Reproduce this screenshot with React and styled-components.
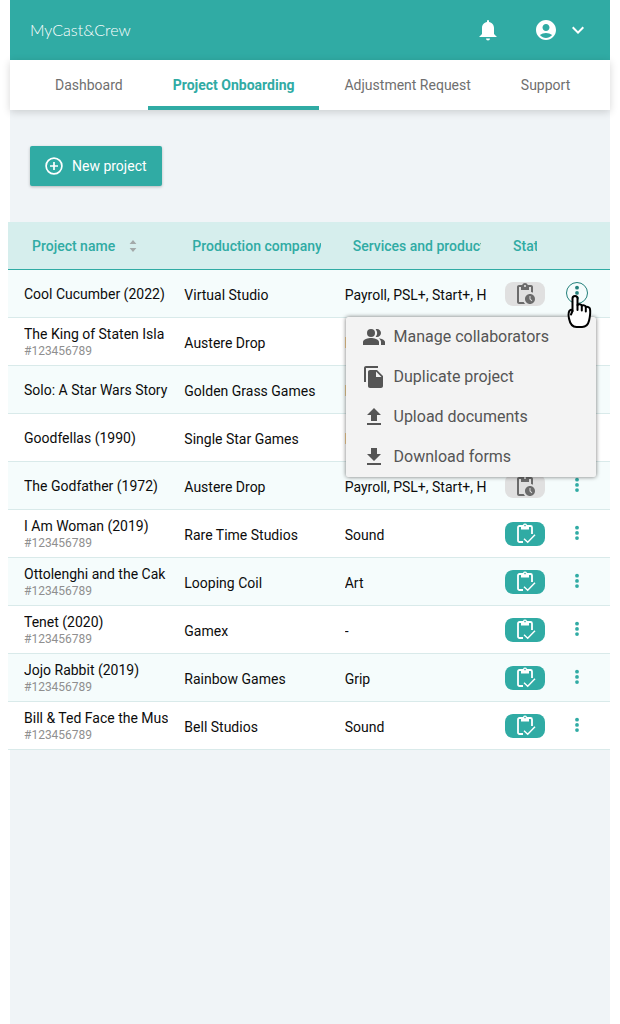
import React from 'react'
import styled, { createGlobalStyle } from 'styled-components';
import { MdAccountCircle, MdFileCopy, MdKeyboardArrowDown, MdPendingActions, MdPeopleAlt } from 'react-icons/md';

const tabs = ['Dashboard', 'Project Onboarding', 'Adjustment Request', 'Support'];

const projects = [
  { name: 'Cool Cucumber (2022)', company: 'Virtual Studio', services: 'Payroll, PSL+, Start+, H', pending: true },
  { name: 'The King of Staten Isla', id: '#123456789', company: 'Austere Drop', services: 'Payroll, PSL+, Start+, H', pending: true },
  { name: 'Solo: A Star Wars Story', company: 'Golden Grass Games', services: 'Payroll, PSL+, Start+, H', pending: true },
  { name: 'Goodfellas (1990)', company: 'Single Star Games', services: 'Payroll, PSL+, Start+, H', pending: true },
  { name: 'The Godfather (1972)', company: 'Austere Drop', services: 'Payroll, PSL+, Start+, H', pending: true },
  { name: 'I Am Woman (2019)', id: '#123456789', company: 'Rare Time Studios', services: 'Sound' },
  { name: 'Ottolenghi and the Cak', id: '#123456789', company: 'Looping Coil', services: 'Art' },
  { name: 'Tenet (2020)', id: '#123456789', company: 'Gamex', services: '-' },
  { name: 'Jojo Rabbit (2019)', id: '#123456789', company: 'Rainbow Games', services: 'Grip' },
  { name: 'Bill & Ted Face the Music', id: '#123456789', company: 'Bell Studios', services: 'Sound' },
];

const BellIcon = () => (
  <svg width="24" height="24" viewBox="0 0 24 24" fill="currentColor">
    <path d="M14 20.500a2 2 0 0 1-4 0h4M12 2a1 1 0 0 1 1 1v1.080c2.840.480 5 2.950 5 5.920v6l3 3H3l3-3v-6c0-2.970 2.160-5.440 5-5.920V3a1 1 0 0 1 1-1z" />
  </svg>
)

const PlusCircleIcon = () => (
  <svg width="18" height="18" viewBox="0 0 18 18" fill="none" stroke="currentColor" strokeWidth="1.7">
    <circle cx="9" cy="9" r="7.900" />
    <path d="M9 5v8M5 9h8" />
  </svg>
)

const SortIcon = () => (
  <svg width="8" height="12" viewBox="0 0 8 12" fill="#a3a9a9">
    <path d="M4 0l3.400 4H.6zM4 12l3.400-4H.6z" />
  </svg>
)

const CheckedIcon = () => (
  <svg width="24" height="24" viewBox="0 0 24 24" fill="none" stroke="#fff">
    <path d="M10 20H6.500A1.500 1.500 0 0 1 5 18.500v-13A1.500 1.500 0 0 1 6.500 4h11A1.500 1.500 0 0 1 19 5.500V12" strokeWidth="1.800" />
    <path d="M8 3h2a2.100 2.100 0 0 1 4 0h2v4.500H8z" fill="#fff" stroke="none" />
    <circle cx="12" cy="3.600" r="0.800" fill="#30aba4" stroke="none" />
    <path d="M11 16.800l3.700 3.500 7.300-7.500" strokeWidth="1.400" />
  </svg>
)

const UploadIcon = () => (
  <svg width="24" height="24" viewBox="0 0 24 24" fill="currentColor">
    <path d="M9 16v-6H5l7-7 7 7h-4v6H9M5 20v-2h14v2H5z" />
  </svg>
)

const DownloadIcon = () => (
  <svg width="24" height="24" viewBox="0 0 24 24" fill="currentColor">
    <path d="M5 20h14v-2H5M19 9h-4V3H9v6H5l7 7 7-7z" />
  </svg>
)

const DotsIcon = () => (
  <svg width="4" height="16" viewBox="0 0 4 16" fill="currentColor">
    <circle cx="2" cy="2.700" r="1.900" />
    <circle cx="2" cy="7.900" r="1.900" />
    <circle cx="2" cy="13.100" r="1.900" />
  </svg>
)

const HandIcon = () => (
  <svg width="28" height="36" viewBox="0 0 28 36" fill="#fff" stroke="#000" strokeWidth="2" strokeLinejoin="round" strokeLinecap="round">
    <path d="M7.500 17V4.500a2.500 2.500 0 0 1 5 0V11c1-1.200 3.700-1 4.300.8 1.200-1 3.500-.5 4 1.200 1.600-.7 3.900.2 4.200 2 .5 3-.1 8-.9 11.500-1 4.300-3.800 6.500-7 6.500h-5.600c-4 0-6.500-3.500-7.500-8.500-.7-3.500-.6-7.500 1.500-8.500 1-.5 1.700.2 2 1z" />
    <path d="M12.500 11v5M16.800 12v4.500M20.800 13v4.500M7.500 17l-1.500 3.500" />
  </svg>
)

const menu = [
  { label: 'Manage collaborators', icon: <MdPeopleAlt size={24} /> },
  { label: 'Duplicate project', icon: <MdFileCopy size={24} /> },
  { label: 'Upload documents', icon: <UploadIcon /> },
  { label: 'Download forms', icon: <DownloadIcon /> },
];

const App = () => {
  return (
    <>
      <GlobalStyle />
      <Page>
        <Header>
          <Brand href="#">MyCast&amp;Crew</Brand>
          <HeaderActions>
            <IconButton aria-label="Notifications"><BellIcon /></IconButton>
            <AccountButton aria-label="Account">
              <MdAccountCircle size={24} />
              <MdKeyboardArrowDown size={24} />
            </AccountButton>
          </HeaderActions>
        </Header>
        <Tabs>
          {
            tabs.map((tab) => (
              <Tab key={tab} href="#" $active={tab === 'Project Onboarding'}>{tab}</Tab>
            ))
          }
        </Tabs>
        <Toolbar>
          <NewButton><PlusCircleIcon />New project</NewButton>
        </Toolbar>
        <Table>
          <colgroup>
            <col />
            <col />
            <col />
            <StatusCol />
            <ActionCol />
          </colgroup>
          <thead>
            <tr>
              <Th><HeadLabel>Project name<SortIcon /></HeadLabel></Th>
              <Th><HeadLabel>Production company</HeadLabel></Th>
              <Th><HeadLabel>Services and products</HeadLabel></Th>
              <Th><HeadLabel>Status</HeadLabel></Th>
              <Th aria-label="Actions" />
            </tr>
          </thead>
          <tbody>
            {
              projects.map((project, index) => (
                <Row key={project.name}>
                  <Td>
                    <Name>{project.name}</Name>
                    {project.id && <ProjectId>{project.id}</ProjectId>}
                  </Td>
                  <Td><Text>{project.company}</Text></Td>
                  <Td><Text>{project.services}</Text></Td>
                  <Td>
                    <Status $pending={project.pending}>
                      {project.pending ? <MdPendingActions size={24} /> : <CheckedIcon />}
                    </Status>
                  </Td>
                  <ActionTd>
                    <MenuAnchor>
                      <MoreButton aria-label="More actions" $open={index === 0}><DotsIcon /></MoreButton>
                      {index === 0 && (
                        <>
                          <Menu>
                            {menu.map((item) => (
                              <li key={item.label}><MenuItem>{item.icon}{item.label}</MenuItem></li>
                            ))}
                          </Menu>
                          <Pointer><HandIcon /></Pointer>
                        </>
                      )}
                    </MenuAnchor>
                  </ActionTd>
                </Row>
              ))
            }
          </tbody>
        </Table>
      </Page>
    </>
  )
}

export default App;

const GlobalStyle = createGlobalStyle`
  * {
    box-sizing: border-box;
  }

  body {
    margin: 0;
    background: #fff;
    color: #0c0c0c;
    font-family: Roboto, sans-serif;
    font-size: 14px;
  }

  button {
    border: 0;
    padding: 0;
    background: none;
    font: inherit;
    color: inherit;
    cursor: pointer;
  }

  svg {
    display: block;
    flex: none;
  }
`
const Page = styled.main`
  min-height: 100vh;
  margin: 0 10px;
  background: #f0f4f7;
`
const Header = styled.header`
  display: flex;
  align-items: center;
  justify-content: space-between;
  height: 60px;
  padding: 0 20px;
  background: #30aba4;
  color: #fff;
`
const Brand = styled.a`
  padding-bottom: 2px;
  font-family: Lato, sans-serif;
  font-size: 16px;
  font-weight: 300;
  color: inherit;
  text-decoration: none;
`
const HeaderActions = styled.div`
  display: flex;
  align-items: center;
  gap: 34px;
`
const IconButton = styled.button`
  display: flex;
`
const AccountButton = styled(IconButton)`
  gap: 8px;
`
const Tabs = styled.nav`
  display: flex;
  height: 50px;
  padding: 0 20px;
  background: #fff;
  box-shadow: 0 2px 8px rgba(0, 0, 0, 0.16);
`
const Tab = styled.a`
  display: flex;
  align-items: center;
  padding: 4px 25px 0;
  border-bottom: 4px solid ${(p) => (p.$active ? '#30aba4' : 'transparent')};
  color: ${(p) => (p.$active ? '#30aba4' : '#6f6f6f')};
  font-weight: ${(p) => (p.$active ? 700 : 400)};
  text-decoration: none;
  white-space: nowrap;
`
const Toolbar = styled.div`
  padding: 36px 20px;
`
const NewButton = styled.button`
  display: flex;
  align-items: center;
  gap: 9px;
  height: 40px;
  padding: 0 15px;
  border-radius: 2px;
  background: #30aba4;
  color: #fff;
  box-shadow: 0 1px 3px rgba(0, 0, 0, 0.25);
`
const Table = styled.table`
  width: calc(100% + 2px);
  margin-left: -2px;
  table-layout: fixed;
  border-spacing: 0;
  background: #fff;
`
const StatusCol = styled.col`
  width: 56px;
`
const ActionCol = styled.col`
  width: 65px;
`
const Th = styled.th`
  height: 48px;
  padding: 0 8px 0 24px;
  border-bottom: 1px solid #30aba4;
  background: #d6eeed;
  color: #30aba4;
  font-weight: 500;
  text-align: left;
`
const HeadLabel = styled.div`
  display: flex;
  align-items: center;
  gap: 14px;
  overflow: hidden;
  white-space: nowrap;
`
const Row = styled.tr`
  &:nth-child(odd) {
    background: #f5fcfc;
  }
`
const Td = styled.td`
  height: 48px;
  padding: 0 0 0 16px;
  border-bottom: 1px solid #d9eaea;
`
const ActionTd = styled(Td)`
  padding: 0 2px 2px 0;
`
const Name = styled.div`
  overflow: hidden;
  line-height: 18px;
  white-space: nowrap;
`
const Text = styled(Name)`
  padding-top: 2px;
`
const ProjectId = styled.div`
  color: #8f8f8f;
  font-size: 12px;
  line-height: 16px;
`
const Status = styled.div`
  display: flex;
  align-items: center;
  justify-content: center;
  width: 40px;
  height: 24px;
  border-radius: 8px;
  background: ${(p) => (p.$pending ? '#e0e0e0' : '#30aba4')};
  color: #6b6b6b;
`
const MenuAnchor = styled.div`
  position: relative;
  width: 22px;
  margin: 0 auto;
`
const MoreButton = styled.button`
  display: flex;
  align-items: center;
  justify-content: center;
  width: 22px;
  height: 22px;
  border: ${(p) => (p.$open ? '1px solid #23807b' : 0)};
  border-radius: 50%;
  color: ${(p) => (p.$open ? '#23807b' : '#30aba4')};
`
const Menu = styled.ul`
  position: absolute;
  z-index: 1;
  top: 35px;
  right: -8px;
  width: 250px;
  margin: 0;
  padding: 0;
  border-radius: 2px;
  background: #f3f3f3;
  box-shadow: 0 0 4px rgba(0, 0, 0, 0.55);
  list-style: none;
`
const MenuItem = styled.button`
  display: flex;
  align-items: center;
  gap: 8px;
  width: 100%;
  height: 40px;
  padding: 0 16px;
  color: #555;
  font-size: 16px;
`
const Pointer = styled.span`
  position: absolute;
  z-index: 2;
  top: 12px;
  left: -1px;
  pointer-events: none;
`
